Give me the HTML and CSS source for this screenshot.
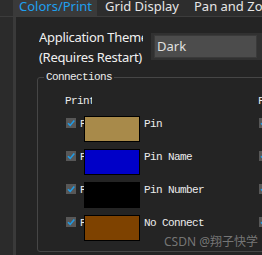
FILE: index.html
```html
<!DOCTYPE html>
<html lang="en">
<head>
  <meta charset="UTF-8" />
  <title>Colors/Print</title>
  <link rel="stylesheet" href="styles.css">
</head>
<body>
  <div class="tabs">
    <div class="tab active">Colors/Print</div>
    <div class="tab">Grid Display</div>
    <div class="tab">Pan and Zoom</div>
  </div>
  <div class="panel">
    <div class="theme-row">
      <div class="theme-label">Application Theme<br>(Requires Restart)</div>
      <div class="combo">
        <div class="combo-field">Dark</div>
        <span class="combo-arrow"></span>
      </div>
    </div>
    <fieldset class="group">
      <legend>Connections</legend>
      <div class="table">
        <div class="hdr-print">Print</div>
        <div class="hdr-fill">Fill</div>

        <div class="print-cell"><span class="cb"><svg width="10" height="10" viewBox="0 0 10 10"><path d="M2 5.2 L4.2 7.4 L8.3 2.6" fill="none" stroke="#1e9ce8" stroke-width="1.6"/></svg></span><span>Pin</span></div>
        <div class="swatch" style="background:#a88a4a"></div>
        <div class="name">Pin</div>
        <div class="fill-cell"><span class="cb"><svg width="10" height="10" viewBox="0 0 10 10"><path d="M2 5.2 L4.2 7.4 L8.3 2.6" fill="none" stroke="#1e9ce8" stroke-width="1.6"/></svg></span></div>

        <div class="print-cell"><span class="cb"><svg width="10" height="10" viewBox="0 0 10 10"><path d="M2 5.2 L4.2 7.4 L8.3 2.6" fill="none" stroke="#1e9ce8" stroke-width="1.6"/></svg></span><span>Pin</span></div>
        <div class="swatch" style="background:#0000c8"></div>
        <div class="name">Pin Name</div>
        <div class="fill-cell"><span class="cb"><svg width="10" height="10" viewBox="0 0 10 10"><path d="M2 5.2 L4.2 7.4 L8.3 2.6" fill="none" stroke="#1e9ce8" stroke-width="1.6"/></svg></span></div>

        <div class="print-cell"><span class="cb"><svg width="10" height="10" viewBox="0 0 10 10"><path d="M2 5.2 L4.2 7.4 L8.3 2.6" fill="none" stroke="#1e9ce8" stroke-width="1.6"/></svg></span><span>Pin</span></div>
        <div class="swatch" style="background:#000000"></div>
        <div class="name">Pin Number</div>
        <div class="fill-cell"><span class="cb"><svg width="10" height="10" viewBox="0 0 10 10"><path d="M2 5.2 L4.2 7.4 L8.3 2.6" fill="none" stroke="#1e9ce8" stroke-width="1.6"/></svg></span></div>

        <div class="print-cell"><span class="cb"><svg width="10" height="10" viewBox="0 0 10 10"><path d="M2 5.2 L4.2 7.4 L8.3 2.6" fill="none" stroke="#1e9ce8" stroke-width="1.6"/></svg></span><span>Pin</span></div>
        <div class="swatch" style="background:#7e4200"></div>
        <div class="name">No Connect</div>
        <div class="fill-cell"><span class="cb"><svg width="10" height="10" viewBox="0 0 10 10"><path d="M2 5.2 L4.2 7.4 L8.3 2.6" fill="none" stroke="#1e9ce8" stroke-width="1.6"/></svg></span></div>
      </div>
    </fieldset>
    <div class="watermark">CSDN @翔子快学</div>
  </div>
</body>
</html>
```

FILE: styles.css
```css
html, body {
  margin: 0;
  width: 262px;
  height: 255px;
  overflow: hidden;
}
body {
  background: #2b2b2b;
  font-family: 'Noto Sans', 'Noto Sans CJK SC', sans-serif;
  color: #e6e6e6;
}
.tabs {
  display: flex;
  height: 16px;
  padding-left: 13px;
  background: #2d2d2d;
  border-bottom: 1px solid #3c3c3c;
  font-size: 13px;
  line-height: 13px;
  white-space: nowrap;
}
.tab {
  padding: 0 7px 0 8px;
}
.tab.active {
  background: #3a3a3a;
  color: #1ea0f0;
  padding: 0 5px 0 6px;
}
.panel {
  position: relative;
  margin-left: 13px;
  border-left: 3px solid #3a3a3a;
  background: #242424;
  height: 238px;
  padding-top: 10px;
  box-sizing: border-box;
  overflow: hidden;
}
.theme-row {
  display: flex;
  align-items: flex-start;
  padding-left: 23px;
  gap: 8px;
}
.theme-label {
  flex-shrink: 0;
  width: 104px;
  overflow: hidden;
  white-space: nowrap;
  font-size: 13px;
  line-height: 20px;
  letter-spacing: -0.3px;
  color: #f0f0f0;
}
.combo {
  display: flex;
  align-items: center;
  margin-top: 6px;
  padding: 2px 3px;
  background: #313131;
  width: 140px;
  flex-shrink: 0;
}
.combo-field {
  width: 99px;
  height: 21px;
  background: #4c4c4c;
  border: 1px solid #3a3a3a;
  color: #e0e0e0;
  font-size: 13px;
  line-height: 20px;
  padding-left: 2px;
  box-sizing: content-box;
}
.combo-arrow {
  width: 3px;
  height: 1px;
  margin-left: 5px;
  background: #8a8a8a;
}
.group {
  margin: 2px 0 0 21px;
  width: 280px;
  padding: 8px 0 10px 27px;
  border: 1px solid #464646;
  border-radius: 3px;
  font-family: 'Liberation Mono', 'DejaVu Sans Mono', monospace;
  font-size: 11px;
  letter-spacing: -0.6px;
  color: #ececec;
}
.group legend {
  margin-left: -21px;
  padding: 0 2px;
  line-height: 16px;
}
.table {
  display: grid;
  grid-template-columns: 19px 56px 119px 40px;
  grid-auto-rows: 26px;
  grid-template-rows: 16px;
  row-gap: 7px;
  line-height: 16px;
  white-space: nowrap;
}
.hdr-print {
  grid-column: 1 / 3;
  width: 27px;
  overflow: hidden;
}
.hdr-fill {
  grid-column: 4;
  margin-left: -1px;
}
.print-cell {
  display: flex;
  align-items: flex-start;
  gap: 4px;
  padding-left: 1px;
  overflow: hidden;
}
.cb {
  flex-shrink: 0;
  display: flex;
  width: 10px;
  height: 10px;
  margin-top: 2px;
  background: #575757;
}
.swatch {
  border: 1px solid #000;
  box-sizing: border-box;
}
.name {
  padding-left: 4px;
}
.fill-cell {
  display: flex;
}
.watermark {
  position: absolute;
  right: 4px;
  top: 215px;
  font-family: 'Noto Sans', 'Noto Sans CJK SC', sans-serif;
  font-size: 12px;
  letter-spacing: 0;
  color: rgba(190, 190, 190, 0.55);
}
```
